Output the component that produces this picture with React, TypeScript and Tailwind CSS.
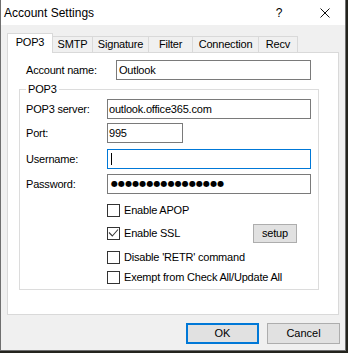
const tabs = [
  { label: "SMTP", w: "w-[41px]" },
  { label: "Signature", w: "w-[57px]" },
  { label: "Filter", w: "w-[45px]" },
  { label: "Connection", w: "w-[67px]" },
  { label: "Recv", w: "w-[40px]" },
];

function Checkbox({ checked = false }: { checked?: boolean }) {
  return (
    <div className="relative w-[13px] h-[13px] border border-[#333333] bg-white shrink-0">
      {checked && (
        <svg className="absolute left-0 top-0" width="11" height="11" viewBox="0 0 11 11">
          <polyline points="1,4.5 4.3,8 10,1.5" fill="none" stroke="#3a3a3a" strokeWidth="1.1" />
        </svg>
      )}
    </div>
  );
}

function Field({ label, w, value, focused = false, children }: { label: string; w: string; value?: string; focused?: boolean; children?: React.ReactNode }) {
  return (
    <div className="flex items-center pl-[6px]">
      <span className="w-[81px]">{label}</span>
      <div
        className={`${w} h-[20px] border bg-white flex items-center pl-[1px] ${focused ? "border-[#0078d7]" : "border-[#7a7a7a]"}`}
      >
        {value}
        {children}
      </div>
    </div>
  );
}

export default function App() {
  return (
    <div className="w-[348px] h-[353px] bg-[#23231d] font-['Liberation_Sans',Arial,sans-serif] text-black">
      <div className="w-[346px] h-[351px] border-l border-r border-b border-[#6f6f6f] bg-[#f0f0f0] flex flex-col">
        {/* title bar */}
        <div className="h-[25px] bg-white flex items-center text-[12px] shrink-0">
          <span className="pl-[3px]">Account Settings</span>
          <div className="flex-1" />
          <div className="w-[46px] flex justify-center">?</div>
          <div className="w-[43px] flex pl-[18px]">
            <svg width="10" height="10" viewBox="0 0 10 10">
              <path d="M0.5 0.5 L9.5 9.5 M9.5 0.5 L0.5 9.5" stroke="#111" strokeWidth="1" />
            </svg>
          </div>
        </div>

        {/* tabs */}
        <div className="mt-[8px] ml-[6px] h-[19px] flex items-end text-[11px] tracking-[-0.2px] shrink-0">
          <div className="relative z-10 w-[46px] h-[20px] -mb-px bg-white border border-b-0 border-[#d9d9d9] flex items-center justify-center pb-[2px]">
            POP3
          </div>
          {tabs.map((t) => (
            <div
              key={t.label}
              className={`${t.w} h-[16px] -ml-px border border-b-0 border-[#d9d9d9] bg-[#f0f0f0] flex items-center justify-center`}
            >
              {t.label}
            </div>
          ))}
        </div>

        {/* panel */}
        <div className="ml-[6px] w-[332px] h-[263px] bg-white border border-[#d9d9d9] flex flex-col text-[11px] tracking-[-0.2px] shrink-0">
          <div className="mt-[7px] flex items-center pl-[18px]">
            <span className="w-[90px]">Account name:</span>
            <div className="w-[195px] h-[20px] border border-[#7a7a7a] flex items-center pl-[2px]">Outlook</div>
          </div>

          <div className="relative mt-[9px] ml-[11px] w-[300px] h-[201px] border border-[#dcdcdc] flex flex-col">
            <span className="absolute left-[6px] -top-[7px] bg-white px-[2px] leading-[13px]">POP3</span>

            <div className="mt-[9px]">
              <Field label="POP3 server:" w="w-[204px]" value="outlook.office365.com" />
            </div>
            <div className="mt-[4px]">
              <Field label="Port:" w="w-[76px]" value="995" />
            </div>
            <div className="mt-[6px]">
              <Field label="Username:" w="w-[204px]" focused>
                <div className="ml-[2px] w-px h-[12px] bg-black" />
              </Field>
            </div>
            <div className="mt-[5px]">
              <Field label="Password:" w="w-[204px]">
                <span className="pl-[2px] font-['DejaVu_Sans',sans-serif] text-[8px] tracking-[0.1px]">
                  ●●●●●●●●●●●●●●●●
                </span>
              </Field>
            </div>

            <div className="pl-[87px] flex flex-col">
              <div className="mt-[10px] h-[13px] flex items-center gap-[4px]">
                <Checkbox />
                <span>Enable APOP</span>
              </div>
              <div className="mt-[7px] h-[19px] flex items-center gap-[4px]">
                <Checkbox checked />
                <span className="flex-1">Enable SSL</span>
                <div className="mr-[21px] w-[44px] h-[19px] bg-[#e1e1e1] border border-[#adadad] flex items-center justify-center">
                  setup
                </div>
              </div>
              <div className="mt-[8px] h-[13px] flex items-center gap-[4px]">
                <Checkbox />
                <span>Disable 'RETR' command</span>
              </div>
              <div className="mt-[7px] h-[13px] flex items-center gap-[4px]">
                <Checkbox />
                <span>Exempt from Check All/Update All</span>
              </div>
            </div>
          </div>
        </div>

        {/* buttons */}
        <div className="mt-[8px] flex justify-end gap-[8px] pr-[5px] text-[11px] shrink-0">
          <button className="w-[73px] h-[21px] bg-[#e1e1e1] border-2 border-[#0078d7] flex items-center justify-center">
            OK
          </button>
          <button className="w-[73px] h-[21px] bg-[#e1e1e1] border border-[#adadad] flex items-center justify-center">
            Cancel
          </button>
        </div>
      </div>
    </div>
  );
}
